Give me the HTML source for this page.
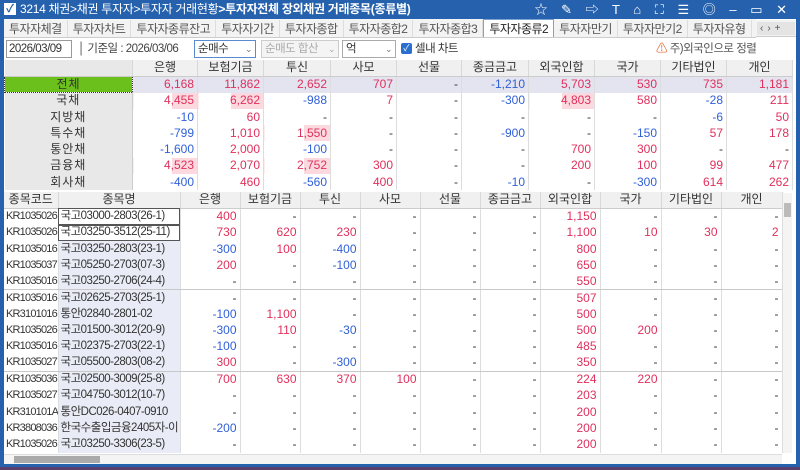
<!DOCTYPE html>
<html><head><meta charset="utf-8"><style>
*{box-sizing:border-box;margin:0;padding:0}
body{width:800px;height:470px;overflow:hidden;background:#fff;font-family:"Liberation Sans","Noto Sans CJK KR",sans-serif;font-size:12px;color:#333;position:relative}
.abs{position:absolute}
#title{left:0;top:0;width:800px;height:19px;background:#2561ad;color:#fff;font-size:12px;line-height:19px;letter-spacing:-0.3px}
#frame{left:0;top:19px;width:800px;height:448px;border-left:4px solid #2561ad;border-right:4px solid #2561ad;border-bottom:3px solid #2561ad}
#tabs{left:4px;top:19px;width:752px;height:19px;background:#f3f3f3;border-bottom:1px solid #ccc;white-space:nowrap;overflow:hidden}
#tabs span{display:inline-block;padding:0 5px;line-height:18px;color:#555;font-size:12px;letter-spacing:-0.5px;border-right:1px solid #ddd}
#tabs span.on{background:#fff;border:1px solid #7aa3d4;border-bottom:none;color:#222}
table{border-collapse:collapse;table-layout:fixed;position:absolute}
td{height:16.3px;padding:0 3px;white-space:nowrap;overflow:hidden;font-size:12px;line-height:15px;border-right:1px solid #ddd}
.r{text-align:right}.c{text-align:center}
.red{color:#e0305c}.blu{color:#3060d8}
.hd td{background:#f0f0f0;text-align:center;color:#333;border-bottom:1px solid #ccc;border-right:1px solid #d8d8d8}
.lab{background:#e8e8e8;text-align:center;color:#333;border-right:1px solid #ccc;letter-spacing:1px}
.tot td{background:#e4e4f0}
.pk{background:linear-gradient(to left,#fcd9df 0,#fcd9df var(--w),transparent var(--w))}
.nm{background:#e9ecf6;text-align:left;font-size:11.5px;letter-spacing:-0.5px;padding:0 2px}
.cd{font-size:11px;letter-spacing:-0.8px;padding:0 1px 0 2px}
.sel{background:#fff;outline:1px solid #555;outline-offset:-1px}
.sep td{border-bottom:1px solid #c8c8c8}
.tb{font-size:11.5px;letter-spacing:-0.5px}
</style></head><body>
<div class="abs" id="title"><span style="display:inline-block;width:12px;height:12px;background:#fff;margin:3px 4px 0 4px;vertical-align:top;color:#2561ad;font-size:11px;line-height:12px;text-align:center;font-weight:bold">✓</span>3214 채권&gt;채권 투자자&gt;투자자 거래현황<b>&gt;투자자전체 장외채권 거래종목(종류별)</b>
<span class="abs" style="right:8px;top:0;font-size:13px;letter-spacing:5px">☆ ✎ ⇨ T ⌂ ⛶ ☰ ◎ ‒ ▭ ✕</span></div>
<div class="abs" id="frame"></div>
<div class="abs" id="tabs"><span>투자자체결</span><span>투자자차트</span><span>투자자종류잔고</span><span>투자자기간</span><span>투자자종합</span><span>투자자종합2</span><span>투자자종합3</span><span class="on">투자자종류2</span><span>투자자만기</span><span>투자자만기2</span><span>투자자유형</span><span>국고</span></div>
<div class="abs" style="left:756px;top:20px;width:40px;height:17px;background:#f3f3f3;border-bottom:1px solid #ccc"></div>
<div class="abs" style="left:757px;top:22px;width:38px;height:13px;background:#e4e4e4;font-size:10px;color:#555;letter-spacing:4px;padding-left:3px;line-height:13px">‹›+</div>
<!-- toolbar -->
<div class="abs tb" style="left:6px;top:40px;width:66px;height:18px;border:1px solid #999;line-height:16px;padding-left:2px">2026/03/09 ▭</div>
<div class="abs tb" style="left:78px;top:40px;line-height:18px;color:#444">│ 기준일 : 2026/03/06</div>
<div class="abs tb" style="left:194px;top:40px;width:62px;height:18px;border:1px solid #5a8ad0;line-height:16px;padding-left:3px">순매수 <span style="float:right;margin-right:3px;font-size:9px;color:#777">⌄</span></div>
<div class="abs tb" style="left:261px;top:40px;width:78px;height:18px;border:1px solid #ccc;line-height:16px;padding-left:3px;color:#aaa;background:#f4f4f4">순매도 합산<span style="float:right;margin-right:3px;font-size:9px">⌄</span></div>
<div class="abs tb" style="left:342px;top:40px;width:54px;height:18px;border:1px solid #aaa;line-height:16px;padding-left:3px">억<span style="float:right;margin-right:3px;font-size:9px;color:#777">⌄</span></div>
<div class="abs" style="left:401px;top:43px;width:11px;height:11px;background:#2a6fd0;border-radius:2px;color:#fff;font-size:9px;line-height:11px;text-align:center">✓</div>
<div class="abs tb" style="left:415px;top:40px;line-height:18px">셀내 차트</div>
<div class="abs tb" style="left:656px;top:40px;line-height:18px;color:#555"><span style="color:#e86a3a">⚠</span> 주)외국인으로 정렬</div>
<!-- top table -->
<table style="left:4px;top:60px;width:788px">
<colgroup><col style="width:128px"><col style="width:65px"><col style="width:66px"><col style="width:67px"><col style="width:66px"><col style="width:65px"><col style="width:67px"><col style="width:66px"><col style="width:66px"><col style="width:66px"><col style="width:66px"></colgroup>
<tr class="hd"><td style="background:#e8e8e8"></td><td>은행</td><td>보험기금</td><td>투신</td><td>사모</td><td>선물</td><td>종금금고</td><td>외국인합</td><td>국가</td><td>기타법인</td><td>개인</td></tr>
<tr class="tot"><td class="lab" style="background:#6cc01c;border:1px dotted #333">전체</td><td class="r red pk" style="--w:40%">6,168</td><td class="r red pk" style="--w:70%">11,862</td><td class="r red pk" style="--w:40%">2,652</td><td class="r red">707</td><td class="r">-</td><td class="r blu">-1,210</td><td class="r red pk" style="--w:50%">5,703</td><td class="r red">530</td><td class="r red">735</td><td class="r red">1,181</td></tr>
<tr><td class="lab">국채</td><td class="r red pk" style="--w:40%">4,455</td><td class="r red pk" style="--w:50%">6,262</td><td class="r blu">-988</td><td class="r red">7</td><td class="r">-</td><td class="r blu">-300</td><td class="r red pk" style="--w:50%">4,803</td><td class="r red">580</td><td class="r blu">-28</td><td class="r red">211</td></tr>
<tr><td class="lab">지방채</td><td class="r blu">-10</td><td class="r red">60</td><td class="r">-</td><td class="r">-</td><td class="r">-</td><td class="r">-</td><td class="r">-</td><td class="r">-</td><td class="r blu">-6</td><td class="r red">50</td></tr>
<tr><td class="lab">특수채</td><td class="r blu">-799</td><td class="r red">1,010</td><td class="r red pk" style="--w:40%">1,550</td><td class="r">-</td><td class="r">-</td><td class="r blu">-900</td><td class="r">-</td><td class="r blu">-150</td><td class="r red">57</td><td class="r red">178</td></tr>
<tr><td class="lab">통안채</td><td class="r blu">-1,600</td><td class="r red">2,000</td><td class="r blu">-100</td><td class="r">-</td><td class="r">-</td><td class="r">-</td><td class="r red">700</td><td class="r red">300</td><td class="r">-</td><td class="r">-</td></tr>
<tr><td class="lab">금융채</td><td class="r red pk" style="--w:40%">4,523</td><td class="r red">2,070</td><td class="r red pk" style="--w:40%">2,752</td><td class="r red">300</td><td class="r">-</td><td class="r">-</td><td class="r red">200</td><td class="r red">100</td><td class="r red">99</td><td class="r red">477</td></tr>
<tr><td class="lab">회사채</td><td class="r blu">-400</td><td class="r red">460</td><td class="r blu">-560</td><td class="r red">400</td><td class="r">-</td><td class="r blu">-10</td><td class="r">-</td><td class="r blu">-300</td><td class="r red">614</td><td class="r red">262</td></tr>
</table>
<!-- bottom table -->
<table style="left:4px;top:192px;width:778px">
<colgroup><col style="width:54px"><col style="width:122px"><col style="width:60px"><col style="width:60px"><col style="width:60px"><col style="width:60px"><col style="width:60px"><col style="width:60px"><col style="width:60px"><col style="width:61px"><col style="width:60px"><col style="width:61px"></colgroup>
<tr class="hd"><td>종목코드</td><td>종목명</td><td>은행</td><td>보험기금</td><td>투신</td><td>사모</td><td>선물</td><td>종금금고</td><td>외국인합</td><td>국가</td><td>기타법인</td><td>개인</td></tr>
<tr><td class="cd">KR1035026</td><td class="nm sel">국고03000-2803(26-1)</td><td class="r red">400</td><td class="r">-</td><td class="r">-</td><td class="r">-</td><td class="r">-</td><td class="r">-</td><td class="r red">1,150</td><td class="r">-</td><td class="r">-</td><td class="r">-</td></tr>
<tr><td class="cd">KR1035026</td><td class="nm sel">국고03250-3512(25-11)</td><td class="r red">730</td><td class="r red">620</td><td class="r red">230</td><td class="r">-</td><td class="r">-</td><td class="r">-</td><td class="r red">1,100</td><td class="r red">10</td><td class="r red">30</td><td class="r red">2</td></tr>
<tr><td class="cd">KR1035016</td><td class="nm">국고03250-2803(23-1)</td><td class="r blu">-300</td><td class="r red">100</td><td class="r blu">-400</td><td class="r">-</td><td class="r">-</td><td class="r">-</td><td class="r red">800</td><td class="r">-</td><td class="r">-</td><td class="r">-</td></tr>
<tr><td class="cd">KR1035037</td><td class="nm">국고05250-2703(07-3)</td><td class="r red">200</td><td class="r">-</td><td class="r blu">-100</td><td class="r">-</td><td class="r">-</td><td class="r">-</td><td class="r red">650</td><td class="r">-</td><td class="r">-</td><td class="r">-</td></tr>
<tr class="sep"><td class="cd">KR1035016</td><td class="nm">국고03250-2706(24-4)</td><td class="r">-</td><td class="r">-</td><td class="r">-</td><td class="r">-</td><td class="r">-</td><td class="r">-</td><td class="r red">550</td><td class="r">-</td><td class="r">-</td><td class="r">-</td></tr>
<tr><td class="cd">KR1035016</td><td class="nm">국고02625-2703(25-1)</td><td class="r">-</td><td class="r">-</td><td class="r">-</td><td class="r">-</td><td class="r">-</td><td class="r">-</td><td class="r red">507</td><td class="r">-</td><td class="r">-</td><td class="r">-</td></tr>
<tr><td class="cd">KR3101016</td><td class="nm">통안02840-2801-02</td><td class="r blu">-100</td><td class="r red">1,100</td><td class="r">-</td><td class="r">-</td><td class="r">-</td><td class="r">-</td><td class="r red">500</td><td class="r">-</td><td class="r">-</td><td class="r">-</td></tr>
<tr><td class="cd">KR1035026</td><td class="nm">국고01500-3012(20-9)</td><td class="r blu">-300</td><td class="r red">110</td><td class="r blu">-30</td><td class="r">-</td><td class="r">-</td><td class="r">-</td><td class="r red">500</td><td class="r red">200</td><td class="r">-</td><td class="r">-</td></tr>
<tr><td class="cd">KR1035016</td><td class="nm">국고02375-2703(22-1)</td><td class="r blu">-100</td><td class="r">-</td><td class="r">-</td><td class="r">-</td><td class="r">-</td><td class="r">-</td><td class="r red">485</td><td class="r">-</td><td class="r">-</td><td class="r">-</td></tr>
<tr class="sep"><td class="cd">KR1035027</td><td class="nm">국고05500-2803(08-2)</td><td class="r red">300</td><td class="r">-</td><td class="r blu">-300</td><td class="r">-</td><td class="r">-</td><td class="r">-</td><td class="r red">350</td><td class="r">-</td><td class="r">-</td><td class="r">-</td></tr>
<tr><td class="cd">KR1035036</td><td class="nm">국고02500-3009(25-8)</td><td class="r red">700</td><td class="r red">630</td><td class="r red">370</td><td class="r red">100</td><td class="r">-</td><td class="r">-</td><td class="r red">224</td><td class="r red">220</td><td class="r">-</td><td class="r">-</td></tr>
<tr><td class="cd">KR1035027</td><td class="nm">국고04750-3012(10-7)</td><td class="r">-</td><td class="r">-</td><td class="r">-</td><td class="r">-</td><td class="r">-</td><td class="r">-</td><td class="r red">203</td><td class="r">-</td><td class="r">-</td><td class="r">-</td></tr>
<tr><td class="cd">KR310101A</td><td class="nm">통안DC026-0407-0910</td><td class="r">-</td><td class="r">-</td><td class="r">-</td><td class="r">-</td><td class="r">-</td><td class="r">-</td><td class="r red">200</td><td class="r">-</td><td class="r">-</td><td class="r">-</td></tr>
<tr><td class="cd">KR3808036</td><td class="nm">한국수출입금융2405자-이</td><td class="r blu">-200</td><td class="r">-</td><td class="r">-</td><td class="r">-</td><td class="r">-</td><td class="r">-</td><td class="r red">200</td><td class="r">-</td><td class="r">-</td><td class="r">-</td></tr>
<tr><td class="cd">KR1035026</td><td class="nm">국고03250-3306(23-5)</td><td class="r">-</td><td class="r">-</td><td class="r">-</td><td class="r">-</td><td class="r">-</td><td class="r">-</td><td class="r red">200</td><td class="r">-</td><td class="r">-</td><td class="r">-</td></tr>
</table>
<!-- scrollbars -->
<div class="abs" style="left:782px;top:193px;width:10px;height:260px;background:#f4f4f4;border-left:1px solid #ddd"></div>
<div class="abs" style="left:784px;top:203px;width:7px;height:14px;background:#bbb"></div>
<div class="abs" style="left:4px;top:454px;width:778px;height:10px;background:#f4f4f4;border-top:1px solid #ddd"></div>
<div class="abs" style="left:14px;top:456px;width:86px;height:7px;background:#aaa"></div>
<div class="abs" style="left:0;top:467px;width:800px;height:3px;background:#5a3f6e"></div>
</body></html>
